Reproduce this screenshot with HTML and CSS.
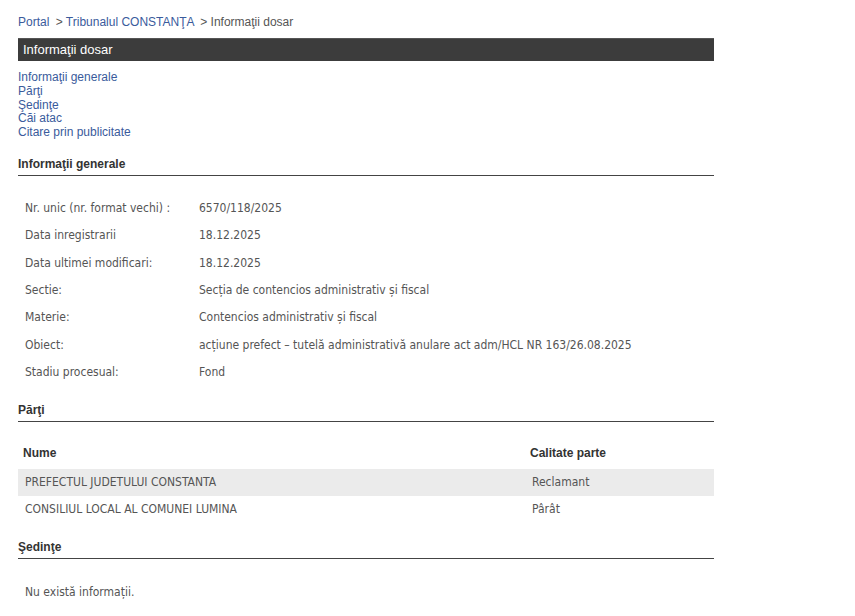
FILE: index.html
```html
<!DOCTYPE html>
<html lang="ro">
<head>
<meta charset="utf-8">
<title>Informații dosar</title>
<link rel="stylesheet" href="styles.css">
</head>
<body>
<div class="page">
  <div class="crumbs">
    <a href="#">Portal</a> <span class="sep">&gt;</span> <a href="#">Tribunalul CONSTANŢA</a> <span class="sep">&gt;</span> <span class="cur">Informaţii dosar</span>
  </div>
  <div class="bar">Informaţii dosar</div>
  <ul class="toc">
    <li><a href="#">Informaţii generale</a></li>
    <li><a href="#">Părţi</a></li>
    <li><a href="#">Şedinţe</a></li>
    <li><a href="#">Căi atac</a></li>
    <li><a href="#">Citare prin publicitate</a></li>
  </ul>

  <h2 class="sect first">Informaţii generale</h2>
  <table class="info">
    <tr><td class="lbl">Nr. unic (nr. format vechi) :</td><td>6570/118/2025</td></tr>
    <tr><td class="lbl">Data inregistrarii</td><td>18.12.2025</td></tr>
    <tr><td class="lbl">Data ultimei modificari:</td><td>18.12.2025</td></tr>
    <tr><td class="lbl">Sectie:</td><td>Secția de contencios administrativ și fiscal</td></tr>
    <tr><td class="lbl">Materie:</td><td>Contencios administrativ și fiscal</td></tr>
    <tr><td class="lbl">Obiect:</td><td>acțiune prefect – tutelă administrativă anulare act adm/HCL NR 163/26.08.2025</td></tr>
    <tr><td class="lbl">Stadiu procesual:</td><td>Fond</td></tr>
  </table>

  <h2 class="sect">Părţi</h2>
  <table class="parties">
    <thead>
      <tr><th class="c1">Nume</th><th>Calitate parte</th></tr>
    </thead>
    <tbody>
      <tr class="alt"><td>PREFECTUL JUDETULUI CONSTANTA</td><td>Reclamant</td></tr>
      <tr><td>CONSILIUL LOCAL AL COMUNEI LUMINA</td><td>Pârât</td></tr>
    </tbody>
  </table>

  <h2 class="sect">Şedinţe</h2>
  <p class="none">Nu există informații.</p>
</div>
</body>
</html>
```
FILE: styles.css
```css
html, body {
  margin: 0;
  padding: 0;
  background: #fff;
}
.page {
  width: 696px;
  padding: 0 18px;
  font-family: "Liberation Sans", Arial, sans-serif;
  font-size: 12px;
  color: #333;
}
.crumbs {
  padding-top: 15px;
  line-height: 14px;
  color: #555;
}
.crumbs a {
  color: #3a5b9c;
  text-decoration: none;
}
.crumbs .sep {
  margin-left: 3px;
}
.bar {
  margin-top: 9px;
  height: 23px;
  line-height: 22px;
  background: #3c3c3c;
  color: #fff;
  font-size: 13px;
  padding-left: 5px;
  border-top: 1px solid #555;
  box-sizing: border-box;
}
.toc {
  list-style: none;
  margin: 10px 0 0;
  padding: 0;
  line-height: 13.8px;
}
.toc a {
  color: #3a5b9c;
  text-decoration: none;
}
.sect {
  margin: 0;
  font-size: 12px;
  font-weight: bold;
  color: #333;
  line-height: 14px;
  padding-bottom: 4px;
  border-bottom: 1px solid #444;
}
.sect.first {
  margin-top: 17px;
}
.info, .parties {
  border-collapse: collapse;
  width: 100%;
  font-family: "DejaVu Sans Condensed", "DejaVu Sans", sans-serif;
  font-stretch: condensed;
  font-size: 12px;
  color: #555;
}
.info {
  margin-top: 19px;
  margin-bottom: 17px;
}
.info td {
  padding: 6px 7px;
  line-height: 15.33px;
  vertical-align: top;
}
.info td.lbl {
  width: 160px;
}
.parties {
  margin-top: 17px;
  margin-bottom: 17px;
}
.parties th {
  font-family: "Liberation Sans", Arial, sans-serif;
  font-stretch: normal;
  font-size: 12px;
  font-weight: bold;
  color: #333;
  text-align: left;
  padding: 6px 5px 8px;
  line-height: 16px;
}
.parties th.c1 {
  width: 497px;
}
.parties td {
  padding: 6px 7px;
  line-height: 15px;
}
.parties tr.alt td {
  background: #ebebeb;
}
.none {
  margin: 26px 0 0;
  padding-left: 7px;
  font-family: "DejaVu Sans Condensed", "DejaVu Sans", sans-serif;
  font-stretch: condensed;
  font-size: 12px;
  color: #555;
  line-height: 14px;
}
```
